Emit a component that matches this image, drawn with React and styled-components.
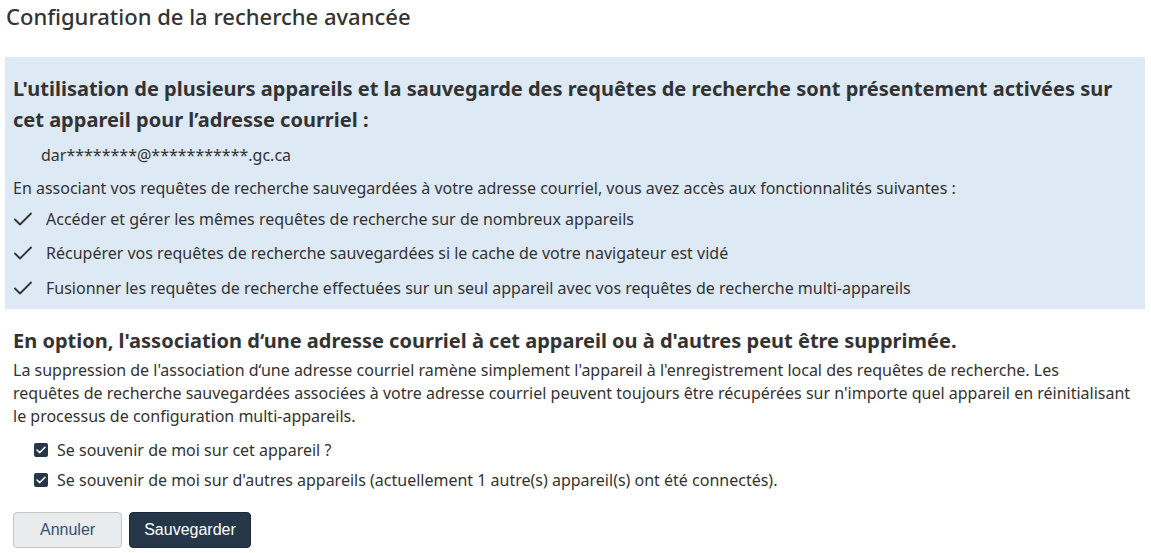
import React from 'react'
import styled, { createGlobalStyle } from 'styled-components'

const GlobalStyle = createGlobalStyle`
  body {
    margin: 0;
    background: #fff;
    font-family: "Noto Sans", "Open Sans", sans-serif;
    color: #333;
  }
`

const Page = styled.div`
  padding: 0 6px 0 5px;
`

const Title = styled.h1`
  margin: 0;
  padding: 2px 0 0 1px;
  font-size: 22px;
  font-weight: 500;
  line-height: 28px;
  color: #333;
`

const InfoBox = styled.section`
  margin-top: 27px;
  background: #dde9f5;
  padding: 15.5px 8px 4px;
`

const Heading = styled.h2`
  margin: 0;
  font-size: 20px;
  font-weight: 700;
  line-height: 31px;
  color: #333;
`

const Email = styled.div`
  margin: 9.5px 0 0 28px;
  font-size: 16px;
  line-height: 22px;
`

const Text = styled.p`
  margin: ${({ $mt }) => $mt || 0}px 0 0;
  font-size: 16px;
  line-height: 23px;
  color: #333;
`

const Features = styled.ul`
  list-style: none;
  margin: 2px 0 0;
  padding: 0;
`

const Feature = styled.li`
  display: flex;
  align-items: center;
  gap: 13px;
  font-size: 16px;
  height: 34.5px;
`

const Check = () => (
  <svg width="20" height="16" viewBox="0 0 20 16" fill="none">
    <path d="M2 8.5 L7 13.5 L18 2.5" stroke="#333" strokeWidth="1.8" strokeLinecap="round" strokeLinejoin="round" />
  </svg>
)

const Section = styled.section`
  padding: 15.5px 2px 0 8px;
`

const Options = styled.div`
  display: flex;
  flex-direction: column;
  margin: 7.5px 0 0 21px;
`

const Option = styled.label`
  display: flex;
  align-items: center;
  gap: 9px;
  height: 30px;
  font-size: 16px;
  color: #333;
`

const Box = styled.span`
  display: inline-flex;
  align-items: center;
  justify-content: center;
  width: 14px;
  height: 14px;
  border-radius: 2px;
  background: #26374a;
`

const Buttons = styled.div`
  display: flex;
  gap: 7px;
  margin-top: 17px;
`

const Button = styled.button`
  font-family: "Liberation Sans", Arial, sans-serif;
  font-size: 16px;
  height: 36px;
  padding: 0 ${({ $primary }) => ($primary ? 14 : 26)}px;
  border-radius: 4px;
  border: 1px solid ${({ $primary }) => ($primary ? '#1c2a39' : '#c5c5c5')};
  background: ${({ $primary }) => ($primary ? '#26374a' : '#eaebed')};
  color: ${({ $primary }) => ($primary ? '#fff' : '#335075')};
  cursor: pointer;
`

const features = [
  'Accéder et gérer les mêmes requêtes de recherche sur de nombreux appareils',
  'Récupérer vos requêtes de recherche sauvegardées si le cache de votre navigateur est vidé',
  'Fusionner les requêtes de recherche effectuées sur un seul appareil avec vos requêtes de recherche multi-appareils',
]

const options = [
  'Se souvenir de moi sur cet appareil ?',
  "Se souvenir de moi sur d'autres appareils (actuellement 1 autre(s) appareil(s) ont été connectés).",
]

export default function App() {
  return (
    <Page>
      <GlobalStyle />
      <Title>Configuration de la recherche avancée</Title>
      <InfoBox>
        <Heading>
          L'utilisation de plusieurs appareils et la sauvegarde des requêtes de recherche sont présentement activées sur cet appareil pour l’adresse courriel :
        </Heading>
        <Email>dar********@***********.gc.ca</Email>
        <Text $mt={10.5}>
          En associant vos requêtes de recherche sauvegardées à votre adresse courriel, vous avez accès aux fonctionnalités suivantes :
        </Text>
        <Features>
          {features.map((f) => (
            <Feature key={f}>
              <Check />
              {f}
            </Feature>
          ))}
        </Features>
      </InfoBox>
      <Section>
        <Heading>En option, l'association d‘une adresse courriel à cet appareil ou à d'autres peut être supprimée.</Heading>
        <Text $mt={3}>
          La suppression de l'association d‘une adresse courriel ramène simplement l'appareil à l'enregistrement local des requêtes de recherche. Les<br />
          requêtes de recherche sauvegardées associées à votre adresse courriel peuvent toujours être récupérées sur n'importe quel appareil en réinitialisant le processus de configuration multi-appareils.
        </Text>
        <Options>
          {options.map((o) => (
            <Option key={o}>
              <Box>
                <svg width="10" height="8" viewBox="0 0 10 8" fill="none">
                  <path d="M1 4 L3.8 6.6 L9 1.2" stroke="#fff" strokeWidth="1.5" strokeLinecap="round" strokeLinejoin="round" />
                </svg>
              </Box>
              {o}
            </Option>
          ))}
        </Options>
        <Buttons>
          <Button>Annuler</Button>
          <Button $primary>Sauvegarder</Button>
        </Buttons>
      </Section>
    </Page>
  )
}
